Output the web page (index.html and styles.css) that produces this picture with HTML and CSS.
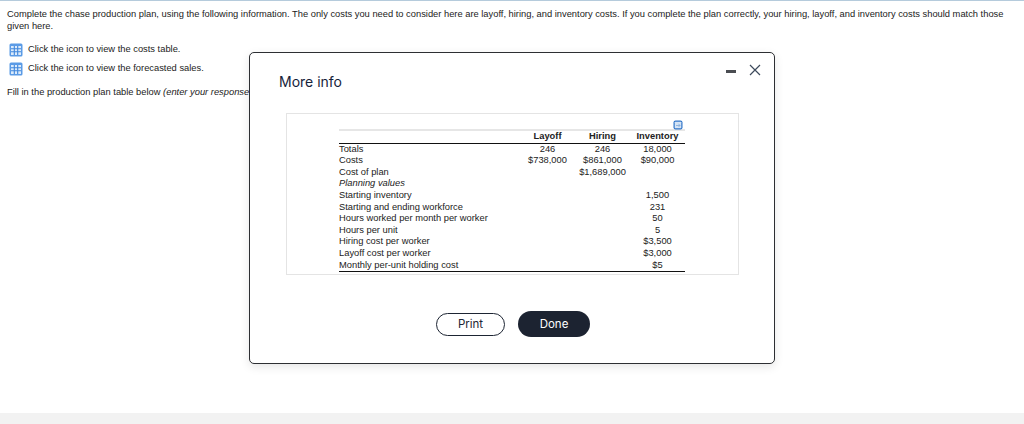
FILE: index.html
```html
<!DOCTYPE html>
<html lang="en">
<head>
<meta charset="utf-8">
<title>More info</title>
<link rel="stylesheet" href="styles.css">
</head>
<body>
<main class="page">
  <p class="intro">Complete the chase production plan, using the following information. The only costs you need to consider here are layoff, hiring, and inventory costs. If you complete the plan correctly, your hiring, layoff, and inventory costs should match those given here.</p>
  <div class="links">
    <div class="link"><svg class="grid-icon" viewBox="0 0 14 14" aria-hidden="true"><rect x="0.5" y="0.5" width="13" height="13" rx="1.5" fill="#5b9be6"/><path d="M2 3h10v9H2z" fill="#dcebfb"/><path d="M2 5.8h10M2 8.8h10M5.3 3v9M8.7 3v9" stroke="#3f86dc" stroke-width="1.1" fill="none"/></svg><span>Click the icon to view the costs table.</span></div>
    <div class="link"><svg class="grid-icon" viewBox="0 0 14 14" aria-hidden="true"><rect x="0.5" y="0.5" width="13" height="13" rx="1.5" fill="#5b9be6"/><path d="M2 3h10v9H2z" fill="#dcebfb"/><path d="M2 5.8h10M2 8.8h10M5.3 3v9M8.7 3v9" stroke="#3f86dc" stroke-width="1.1" fill="none"/></svg><span>Click the icon to view the forecasted sales.</span></div>
  </div>
  <p class="fill">Fill in the production plan table below <em>(enter your response</em></p>
</main>
<div class="band"></div>

<section class="modal">
  <header class="modal-head">
    <h2>More info</h2>
    <div class="controls">
      <span class="minimize"></span>
      <svg class="close" viewBox="0 0 12 12" aria-hidden="true"><path d="M1 1l10 10M11 1L1 11" stroke="#3d4a5c" stroke-width="1.2" fill="none"/></svg>
    </div>
  </header>
  <div class="frame">
    <div class="table-wrap">
      <svg class="copy" viewBox="0 0 10 10" aria-hidden="true"><rect x="0.5" y="0.5" width="9" height="9" rx="2" fill="#2f74c8"/><rect x="1.7" y="1.7" width="6.6" height="6.6" rx="0.5" fill="#d5e4f5"/><path d="M3 5.5h4M5.5 3.8L7 5.5 5.5 7" stroke="#7fa8d8" stroke-width="0.8" fill="none"/></svg>
      <table>
        <thead>
          <tr><th class="label"></th><th>Layoff</th><th>Hiring</th><th>Inventory</th></tr>
        </thead>
        <tbody>
          <tr><td class="label">Totals</td><td>246</td><td>246</td><td>18,000</td></tr>
          <tr><td class="label">Costs</td><td>$738,000</td><td>$861,000</td><td>$90,000</td></tr>
          <tr><td class="label">Cost of plan</td><td></td><td>$1,689,000</td><td></td></tr>
          <tr><td class="label"><em>Planning values</em></td><td></td><td></td><td></td></tr>
          <tr><td class="label">Starting inventory</td><td></td><td></td><td>1,500</td></tr>
          <tr><td class="label">Starting and ending workforce</td><td></td><td></td><td>231</td></tr>
          <tr><td class="label">Hours worked per month per worker</td><td></td><td></td><td>50</td></tr>
          <tr><td class="label">Hours per unit</td><td></td><td></td><td>5</td></tr>
          <tr><td class="label">Hiring cost per worker</td><td></td><td></td><td>$3,500</td></tr>
          <tr><td class="label">Layoff cost per worker</td><td></td><td></td><td>$3,000</td></tr>
          <tr><td class="label">Monthly per-unit holding cost</td><td></td><td></td><td>$5</td></tr>
        </tbody>
      </table>
    </div>
  </div>
  <footer class="actions">
    <button class="btn btn-print" type="button">Print</button>
    <button class="btn btn-done" type="button">Done</button>
  </footer>
</section>
</body>
</html>
```

FILE: styles.css
```css
* { box-sizing: border-box; }
html, body { margin: 0; height: 424px; overflow: hidden; background: #fff; }
body {
  position: relative;
  font-family: "Liberation Sans", Arial, sans-serif;
  color: #222;
  border-top: 1px solid #b5cbdc;
}
.page { height: 412px; padding: 8px 20px 0 7px; font-size: 9.33px; line-height: 11.5px; }
.intro { margin: 0; }
.links { margin-top: 11px; display: flex; flex-direction: column; gap: 5px; }
.link { display: flex; align-items: center; gap: 5px; height: 14px; margin-left: 2px; }
.grid-icon { width: 14px; height: 14px; flex: none; }
.fill { margin: 11px 0 0; white-space: nowrap; }
.band { height: 11px; background: #f2f2f2; }

.modal {
  position: absolute;
  left: 249px;
  top: 51px;
  width: 526px;
  height: 312px;
  background: #fff;
  border: 1.5px solid #2d2f33;
  border-radius: 5px;
  box-shadow: 0 3px 10px rgba(0,0,0,.1);
  display: flex;
  flex-direction: column;
}
.modal-head { height: 60px; padding: 20px 13px 0 29px; display: flex; justify-content: space-between; align-items: flex-start; }
.modal-head h2 { margin: 0; font: 400 14px/18px Inter, "Liberation Sans", sans-serif; color: #16233a; }
.controls { display: flex; align-items: center; gap: 13px; margin-top: -9px; }
.minimize { width: 10px; height: 3px; background: #4a4d52; margin-top: 3px; }
.close { width: 12px; height: 12px; }
.frame { margin-left: 36px; width: 453px; height: 162px; border: 1px solid #e4e4e4; padding: 15px 0 0 52px; }
.table-wrap { position: relative; width: 346px; }
.copy { position: absolute; right: 2px; top: -9px; width: 10px; height: 10px; }
table { width: 346px; table-layout: fixed; border-collapse: collapse; border-top: 2px solid #e6e6e6; border-bottom: 1px solid #111; font-size: 9.33px; line-height: 11.6px; }
thead tr { height: 12px; border-bottom: 1px solid #111; }
th { padding: 0; font-weight: 700; width: 55px; text-align: center; }
td { padding: 0; height: 11.6px; text-align: center; white-space: nowrap; }
th.label { width: 181px; }
td.label { text-align: left; }
.actions { margin-top: 36px; padding-left: 186px; display: flex; align-items: center; gap: 13px; }
.btn { font: 400 11.5px/1 Inter, "Liberation Sans", sans-serif; border-radius: 13px; padding: 2px 0 0; }
.btn-print { width: 69px; height: 23px; background: #fff; color: #1d2533; border: 1.5px solid #1d2533; }
.btn-done { width: 72px; height: 26px; background: #1c2331; color: #fff; border: none; }
```
